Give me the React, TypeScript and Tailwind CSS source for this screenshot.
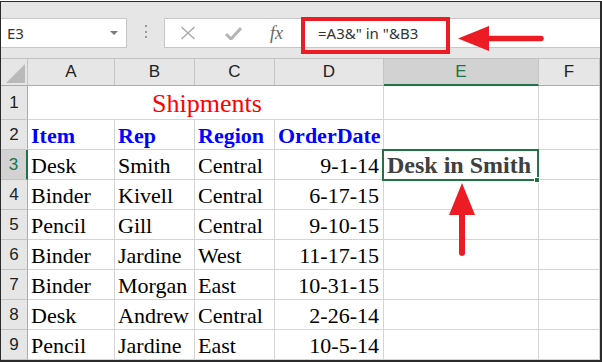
import React from 'react';

const SERIF = "font-['Liberation_Serif','Times_New_Roman',serif]";
const SANS = "font-['Liberation_Sans',Arial,sans-serif]";
const UI = "font-['Noto_Sans','Open_Sans',sans-serif]";

const rows = [
  ['Desk', 'Smith', 'Central', '9-1-14'],
  ['Binder', 'Kivell', 'Central', '6-17-15'],
  ['Pencil', 'Gill', 'Central', '9-10-15'],
  ['Binder', 'Jardine', 'West', '11-17-15'],
  ['Binder', 'Morgan', 'East', '10-31-15'],
  ['Desk', 'Andrew', 'Central', '2-26-14'],
  ['Pencil', 'Jardine', 'East', '10-5-14'],
];

function RowHead({ n, active = false }: { n: number; active?: boolean }) {
  return (
    <div
      className={`flex items-center justify-center border-b border-[#c4c4c4] text-[17px] ${SANS} ${
        active ? 'border-r-2 border-r-[#217346] bg-[#d2d2d2] text-[#217346]' : 'border-r border-r-[#ababab] bg-[#e6e6e6] text-[#222]'
      }`}
    >
      {n}
    </div>
  );
}

function ColHead({ label, active = false }: { label: string; active?: boolean }) {
  return (
    <div
      className={`flex items-center justify-center border-r border-[#c4c4c4] text-[17px] ${SANS} ${
        active ? 'border-b-2 border-b-[#217346] bg-[#d2d2d2] text-[#217346]' : 'border-b border-b-[#ababab] text-[#222]'
      }`}
    >
      {label}
    </div>
  );
}

function Cell({ children, className = '' }: { children?: React.ReactNode; className?: string }) {
  return (
    <div
      className={`relative flex items-end whitespace-nowrap border-r border-b border-[#d4d4d4] bg-white pb-[2px] pl-[3px] leading-none ${SERIF} ${className}`}
    >
      {children}
    </div>
  );
}

export default function App() {
  return (
    <div className="relative h-[362px] w-[602px] bg-white pt-px">
      <div className="h-[361px] border-t border-l border-r-2 border-b-2 border-[#2b2b2b] bg-[#e6e6e6]">
        {/* formula bar */}
        <div className="flex h-[57px] border-b border-[#c2c2c2] pt-[16px]">
          <div className="flex h-[30px] w-[126px] items-center justify-between border border-l-0 border-[#c6c6c6] bg-white pl-[6px] pr-[8px]">
            <span className={`text-[15px] text-[#333] ${UI}`}>E3</span>
            <svg width="8" height="5" viewBox="0 0 8 5">
              <path d="M0 0h8L4 4z" fill="#7a7a7a" />
            </svg>
          </div>
          <div className="flex h-[30px] w-[37px] flex-col items-center gap-[3.5px] pt-[7px] pl-[1px]">
            <span className="h-[2px] w-[2px] bg-[#9a9a9a]" />
            <span className="h-[2px] w-[2px] bg-[#9a9a9a]" />
            <span className="h-[2px] w-[2px] bg-[#9a9a9a]" />
          </div>
          <div className="flex h-[30px] flex-1 items-center border border-r-0 border-[#c6c6c6] bg-white">
            <svg className="ml-[15px]" width="16" height="14" viewBox="0 0 16 14">
              <path d="M1.5 1l13 12M14.5 1l-13 12" stroke="#a8a8a8" strokeWidth="1.4" fill="none" />
            </svg>
            <svg className="ml-[29px]" width="17" height="13" viewBox="0 0 17 13">
              <path d="M1 7l5 5L16 1" stroke="#b4b4b4" strokeWidth="3" fill="none" />
            </svg>
            <span className={`ml-[28px] text-[18px] italic text-[#666] ${SERIF}`}>fx</span>
            <span className={`ml-[35px] text-[15px] text-[#333] ${UI}`}>=A3&amp;" in "&amp;B3</span>
          </div>
        </div>

        {/* sheet */}
        <div className="grid grid-cols-[27px_87px_80px_80px_109px_155px_1fr] grid-rows-[27px_34px_repeat(8,30px)]">
          <div className="flex items-end justify-end border-r border-b border-r-[#c4c4c4] border-b-[#ababab] pr-[2px] pb-[2px]">
            <svg width="19" height="19" viewBox="0 0 19 19">
              <path d="M19 0V19H0z" fill="#b9b9b9" />
            </svg>
          </div>
          <ColHead label="A" />
          <ColHead label="B" />
          <ColHead label="C" />
          <ColHead label="D" />
          <ColHead label="E" active />
          <ColHead label="F" />

          <RowHead n={1} />
          <Cell className="col-span-4 justify-center pl-0 text-[26px] text-[#ff0000]">Shipments</Cell>
          <Cell />
          <Cell />

          <RowHead n={2} />
          <Cell className="text-[22px] font-bold text-[#0000ff]">Item</Cell>
          <Cell className="text-[22px] font-bold text-[#0000ff]">Rep</Cell>
          <Cell className="text-[22px] font-bold text-[#0000ff]">Region</Cell>
          <Cell className="text-[22px] font-bold text-[#0000ff]">OrderDate</Cell>
          <Cell />
          <Cell />

          {rows.map((r, i) => (
            <React.Fragment key={i}>
              <RowHead n={i + 3} active={i === 0} />
              <Cell className="text-[22px] text-black">{r[0]}</Cell>
              <Cell className="text-[22px] text-black">{r[1]}</Cell>
              <Cell className="text-[22px] text-black">{r[2]}</Cell>
              <Cell className="justify-end pr-[4px] text-[22px] text-black">{r[3]}</Cell>
              {i === 0 ? (
                <Cell className="z-10 text-[24px] font-bold text-[#404040]">
                  Desk in Smith
                  <span className="absolute -top-px -right-px -bottom-[2px] -left-[2px] border-2 border-[#217346]" />
                  <span className="absolute top-[27px] left-[150px] h-[6px] w-[6px] border border-white bg-[#217346]" />
                </Cell>
              ) : (
                <Cell />
              )}
              <Cell />
            </React.Fragment>
          ))}
        </div>
      </div>

      {/* callouts */}
      <div className="absolute top-[17px] left-[301px] h-[37px] w-[149px] border-4 border-[#ed1c24]" />
      <svg className="pointer-events-none absolute inset-0" width="602" height="362" viewBox="0 0 602 362">
        <path d="M458 38.5L489 26V51z" fill="#ed1c24" />
        <path d="M487 38.5H541" stroke="#ed1c24" strokeWidth="5.5" strokeLinecap="round" />
        <path d="M462 183L475 215H449z" fill="#ed1c24" />
        <path d="M462 213V253" stroke="#ed1c24" strokeWidth="6" strokeLinecap="round" />
      </svg>
    </div>
  );
}
